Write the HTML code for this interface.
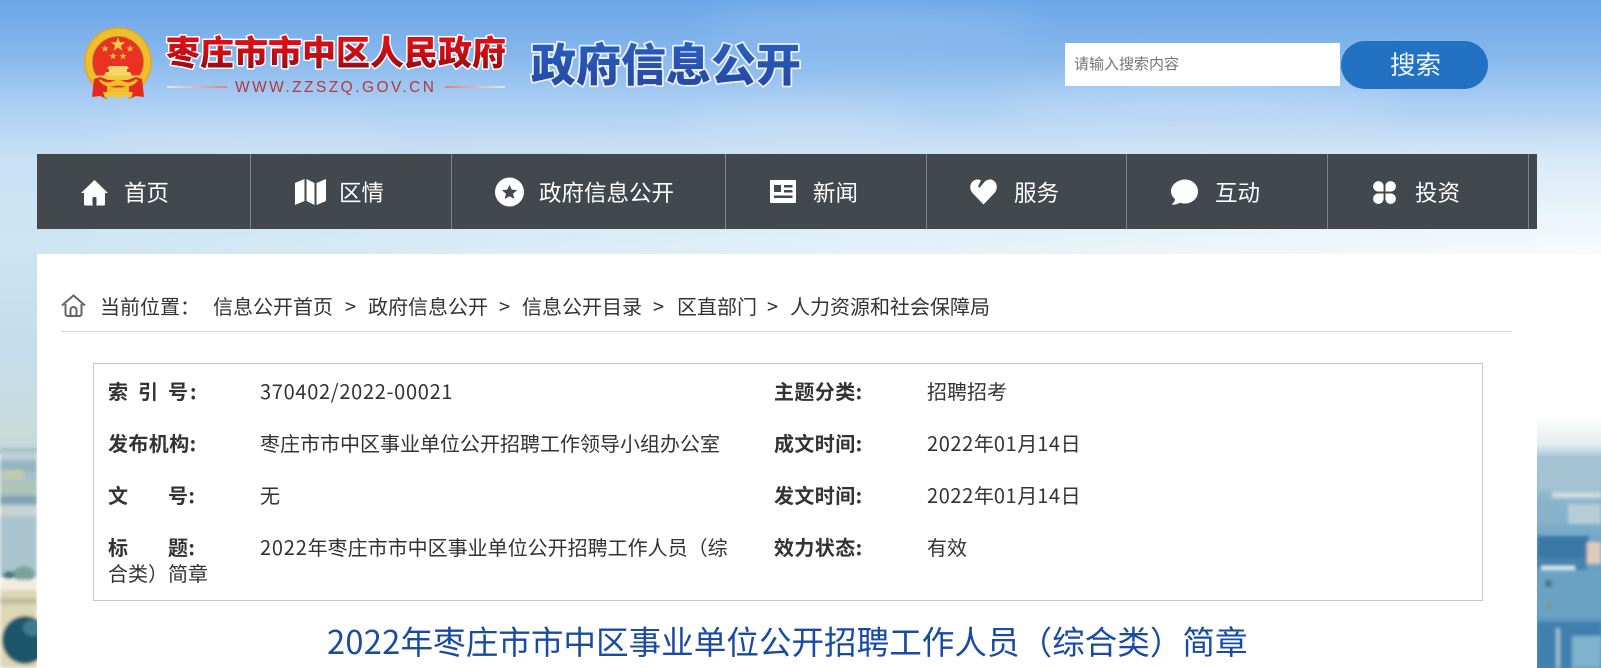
<!DOCTYPE html>
<html lang="zh-CN">
<head>
<meta charset="utf-8">
<title>政府信息公开</title>
<style>
*{margin:0;padding:0;box-sizing:border-box}
html,body{width:1601px;height:668px;overflow:hidden;background:#fff}
body{position:relative;font-family:"Liberation Sans","Noto Sans CJK SC",sans-serif}
.t{position:absolute;white-space:nowrap;font-family:"Noto Sans CJK SC","Liberation Sans",sans-serif;font-size:20px;line-height:24px;color:#333}
.b{font-weight:700;color:#333;letter-spacing:.4px}
.d{letter-spacing:.6px}
.nav{position:absolute;left:37px;top:154px;width:1500px;height:75px;background:#43484c}
.div{position:absolute;top:154px;width:1px;height:75px;background:#7d8286}
.n{position:absolute;top:176px;white-space:nowrap;font-family:"Noto Sans CJK SC",sans-serif;font-size:22.5px;line-height:32px;color:#fff}
svg.abs{position:absolute}
</style>
</head>
<body>
<svg class="abs" style="left:0;top:0" width="1601" height="668" viewBox="0 0 1601 668">
<defs>
<linearGradient id="sky" x1="0" y1="0" x2="0" y2="1">
<stop offset="0" stop-color="#6aa6e8"/>
<stop offset=".2" stop-color="#84b6ec"/>
<stop offset=".42" stop-color="#aed0f3"/>
<stop offset=".62" stop-color="#c9e1f6"/>
<stop offset="1" stop-color="#cfe6f2"/>
</linearGradient>
<linearGradient id="fadeH" x1="0" y1="0" x2="1" y2="0">
<stop offset="0" stop-color="#000"/>
<stop offset=".35" stop-color="#555"/>
<stop offset="1" stop-color="#fff"/>
</linearGradient>
<linearGradient id="fadeV" x1="0" y1="0" x2="0" y2="1">
<stop offset="0" stop-color="#fff" stop-opacity="0"/>
<stop offset="1" stop-color="#fff" stop-opacity=".88"/>
</linearGradient>
<mask id="mH"><rect width="1601" height="668" fill="url(#fadeH)"/></mask>
<linearGradient id="leftS" x1="0" y1="0" x2="0" y2="1">
<stop offset="0" stop-color="#cbe4f1"/>
<stop offset=".5" stop-color="#c4dcec"/>
<stop offset=".9" stop-color="#c8dcdc"/>
<stop offset="1" stop-color="#c4d6d6"/>
</linearGradient>
<linearGradient id="rightC" x1="0" y1="0" x2="0" y2="1">
<stop offset="0" stop-color="#fff"/>
<stop offset=".39" stop-color="#fff"/>
<stop offset=".46" stop-color="#e4edf0"/>
<stop offset=".49" stop-color="#a9c8d8"/>
<stop offset=".7" stop-color="#6fa6c6"/>
<stop offset="1" stop-color="#4f90bb"/>
</linearGradient>
<linearGradient id="redT" x1="0" y1="0" x2="0" y2="1">
<stop offset="0" stop-color="#ee1119"/>
<stop offset=".55" stop-color="#c90d15"/>
<stop offset="1" stop-color="#850a10"/>
</linearGradient>
<linearGradient id="blueT" x1="0" y1="0" x2="0" y2="1">
<stop offset="0" stop-color="#2a66c4"/>
<stop offset="1" stop-color="#27439f"/>
</linearGradient>
<filter id="bl" x="-20%" y="-20%" width="140%" height="140%"><feGaussianBlur stdDeviation="16"/></filter>
<filter id="b1" x="-5%" y="-5%" width="110%" height="110%"><feGaussianBlur stdDeviation="1.6"/></filter>
<filter id="sh" x="-5%" y="-20%" width="110%" height="140%"><feGaussianBlur stdDeviation=".35"/></filter>
</defs>
<rect width="1601" height="260" fill="url(#sky)"/>
<g mask="url(#mH)"><rect x="0" y="110" width="1601" height="150" fill="url(#fadeV)"/></g>
<g filter="url(#bl)" fill="#fff" opacity=".14">
<ellipse cx="870" cy="25" rx="170" ry="16"/>
<ellipse cx="1200" cy="105" rx="200" ry="22"/>
<ellipse cx="800" cy="120" rx="120" ry="16"/>
<ellipse cx="240" cy="135" rx="150" ry="14"/>
</g>
<rect y="254" width="37" height="200" fill="url(#leftS)"/>
<g filter="url(#b1)">
<rect y="448" width="37" height="74" fill="#a3c0cb"/>
<rect y="452" width="37" height="7" fill="#bdd0d4"/>
<rect y="462" width="37" height="10" fill="#93b3c0"/>
<rect x="2" y="470" width="22" height="10" fill="#c0cbb0"/>
<rect y="482" width="37" height="12" fill="#afc3b6"/>
<rect y="496" width="37" height="8" fill="#84a3b4"/>
<rect y="506" width="37" height="10" fill="#c8d3d2"/>
<rect y="516" width="37" height="62" fill="#abc5d0"/>
<ellipse cx="24" cy="574" rx="11" ry="8" fill="#7ba39a"/>
<ellipse cx="9" cy="575" rx="6" ry="4" fill="#3f7a85"/>
<rect y="580" width="37" height="10" fill="#f2ece0"/>
<rect y="590" width="37" height="78" fill="#dcd7b4"/>
<rect y="598" width="37" height="6" fill="#bdbba2"/>
<ellipse cx="25" cy="640" rx="23" ry="24" fill="#1c566b"/>
<ellipse cx="33" cy="628" rx="10" ry="8" fill="#3f7c90"/>
</g>
<rect x="1537" y="254" width="64" height="414" fill="url(#rightC)"/>
<g filter="url(#b1)">
<rect x="1537" y="456" width="64" height="34" fill="#a4c2d3"/>
<rect x="1552" y="492" width="49" height="6" fill="#cfdadd"/>
<rect x="1568" y="504" width="33" height="20" fill="#b7cdd6"/>
<rect x="1537" y="500" width="24" height="25" fill="#87b2c8"/>
<rect x="1537" y="536" width="52" height="22" fill="#3b78a6"/>
<rect x="1587" y="542" width="14" height="22" fill="#dfcbbc"/>
<rect x="1537" y="558" width="50" height="12" fill="#4683b0"/>
<rect x="1541" y="566" width="34" height="4" fill="#dfe9ee"/>
<rect x="1537" y="572" width="64" height="46" fill="#6aa2c4"/>
<rect x="1545" y="580" width="7" height="7" fill="#4f7288"/>
<rect x="1545" y="603" width="7" height="5" fill="#7a959a"/>
<rect x="1537" y="622" width="64" height="46" fill="#3f80ae"/>
<rect x="1572" y="636" width="29" height="32" fill="#7fb2cc"/>
<rect x="1556" y="628" width="4" height="40" fill="#9dbfce"/>
</g>
</svg>

<!-- White panel -->
<div style="position:absolute;left:37px;top:254px;width:1500px;height:414px;background:#fff"></div>

<!-- Emblem + logo -->
<svg class="abs" style="left:0;top:0" width="830" height="110" viewBox="0 0 830 110">
<g filter="url(#sh)">
<ellipse cx="118" cy="62" rx="33" ry="34" fill="#efbd2e"/>
<ellipse cx="118" cy="62" rx="33" ry="34" fill="none" stroke="#e6a81f" stroke-width="1.500"/>
<circle cx="118" cy="62" r="25.500" fill="#ea3022" stroke="#b9891f" stroke-width=".8"/>
<polygon fill="#f4cd4a" points="118,37 119.800,42.200 125.300,42.200 120.900,45.500 122.500,50.800 118,47.600 113.500,50.800 115.100,45.500 110.700,42.200 116.200,42.200"/>
<polygon fill="#eec045" points="105,45 106,47.500 108.600,47.500 106.500,49.200 107.300,51.700 105,50.200 102.700,51.700 103.500,49.200 101.400,47.500 104,47.500"/>
<polygon fill="#eec045" points="130,45 131,47.500 133.600,47.500 131.500,49.200 132.300,51.700 130,50.200 127.700,51.700 128.500,49.200 126.400,47.500 129,47.500"/>
<polygon fill="#eec045" points="113,52.500 114,55 116.600,55 114.500,56.700 115.300,59.200 113,57.700 110.700,59.200 111.500,56.700 109.400,55 112,55"/>
<polygon fill="#eec045" points="123,52.500 124,55 126.600,55 124.500,56.700 125.300,59.200 123,57.700 120.700,59.200 121.500,56.700 119.400,55 122,55"/>
<path fill="#f8d768" d="M109 66h18l2 3h-2v3h3l2 3.500h-28l2-3.500h3v-3h-2z"/>
<path fill="#f3c93f" d="M95 75.500h46l-2.500 4.500h-41z"/>
<path fill="#e42a1c" d="M94 79l-2 18 8-1 7 3V86l7-4-14-5z"/>
<path fill="#e42a1c" d="M142 79l2 18-8-1-7 3V86l-7-4 14-5z"/>
<path fill="#f0bf2c" d="M100 79c5 4 9 4 13 2 3-1.500 7-1.500 10 0 4 2 8 2 13-2l2 1.500c-4 5-9 7-15 5.500-3-.7-6-.7-9 0-6 1.500-11-.5-15-5.500z"/>
<path fill="#f3c536" d="M103 92h30l-2 6-7-2-6 2.500-6-2.500-7 2z"/>
</g>
<text x="166" y="65" font-family="Noto Sans CJK SC" font-size="34" font-weight="900" fill="url(#redT)" stroke="#fff" stroke-width="3" paint-order="stroke fill" stroke-linejoin="round">枣庄市市中区人民政府</text>
<text x="531" y="81" font-family="Noto Sans CJK SC" font-size="45" font-weight="900" fill="url(#blueT)" stroke="#e9f2fc" stroke-width="3.500" paint-order="stroke fill" stroke-linejoin="round">政府信息公开</text>
</svg>
<div style="position:absolute;left:167px;top:86px;width:60px;height:2px;background:linear-gradient(90deg,#dfe7f2,#dc7f7f)"></div>
<div style="position:absolute;left:445px;top:86px;width:60px;height:2px;background:linear-gradient(90deg,#dc7f7f,#dfe7f2)"></div>
<div class="t" style="left:235px;top:77px;font-family:'Liberation Sans',sans-serif;font-size:15.500px;line-height:22px;color:#b3373e;letter-spacing:2.450px">WWW.ZZSZQ.GOV.CN</div>

<!-- Search -->
<div style="position:absolute;left:1065px;top:43px;width:275px;height:43px;background:#fff"></div>
<div class="t" style="left:1074px;top:52px;font-size:15px;color:#757575">请输入搜索内容</div>
<div style="position:absolute;left:1341px;top:41px;width:147px;height:48px;border-radius:24px;background:#2271c2"></div>
<div class="t" style="left:1390px;top:46px;font-size:25.500px;line-height:36px;color:#eef4fb">搜索</div>

<!-- Nav -->
<div class="nav"></div>
<div class="div" style="left:250px"></div>
<div class="div" style="left:451px"></div>
<div class="div" style="left:725px"></div>
<div class="div" style="left:926px"></div>
<div class="div" style="left:1126px"></div>
<div class="div" style="left:1327px"></div>
<div class="div" style="left:1528px"></div>

<svg class="abs" style="left:80px;top:178px" width="29" height="28" viewBox="0 0 29 28"><path fill="#fff" d="M14.500 2 28 15h-3v11a1.500 1.500 0 0 1-1.500 1.500H5.500A1.500 1.500 0 0 1 4 26V15H1z"/><rect x="12.500" y="19" width="4" height="8.500" rx="1" fill="#43484c"/></svg>
<div class="n" style="left:124px">首页</div>

<svg class="abs" style="left:295px;top:178px" width="31" height="28" viewBox="0 0 31 28"><path fill="#fff" d="M0 5 9.500 1v22L0 27zM11.500 1l8 4v22l-8-4zM21.500 5 31 1v22l-9.500 4z"/></svg>
<div class="n" style="left:339px">区情</div>

<svg class="abs" style="left:495px;top:177px" width="29" height="30" viewBox="0 0 30 30"><path fill="#fff" fill-rule="evenodd" d="M15 0a15 15 0 1 0 0 30 15 15 0 0 0 0-30zM15 7.500l2.300 5 5.500.6-4.100 3.700 1.200 5.400L15 19.400l-4.900 2.800 1.200-5.400-4.100-3.700 5.500-.6z"/></svg>
<div class="n" style="left:539px">政府信息公开</div>

<svg class="abs" style="left:770px;top:180px" width="26" height="23" viewBox="0 0 26 23"><path fill="#fff" fill-rule="evenodd" d="M1 0h24a1 1 0 0 1 1 1v21a1 1 0 0 1-1 1H1a1 1 0 0 1-1-1V1a1 1 0 0 1 1-1zM4 5v7h7V5zM14 5v2.500h8.500V5zM14 10v2.500h8.500V10zM4 15.500V18h18.500v-2.500z"/></svg>
<div class="n" style="left:813px">新闻</div>

<svg class="abs" style="left:970px;top:179px" width="27" height="26" viewBox="0 0 27 26"><path fill="#fff" d="M13.500 25.500 2.500 14C-1 10-.5 3.500 4.500 1.200 7 .1 9.500.4 11 1.500L8 7.500l1.500 1.200L14 3.500C16 .8 20-.4 23 1.200c4.500 2.400 5 8.600 1.500 12.800z"/></svg>
<div class="n" style="left:1014px">服务</div>

<svg class="abs" style="left:1171px;top:179px" width="27" height="26" viewBox="0 0 27 26"><path fill="#fff" d="M14 .5C21 .5 27 5.500 27 12.500S21 24.500 14 24.500c-2 0-3.500-.3-5-.8C6.500 25 3.500 26 .5 25.500 2.500 24 4 22 4 20 1.500 18 0 15.500 0 12.500 0 5.500 7 .5 14 .5z"/></svg>
<div class="n" style="left:1215px">互动</div>

<svg class="abs" style="left:1372px;top:180px" width="25" height="25" viewBox="0 0 26 26"><g fill="#fff"><path d="M12 12H5.500A5.500 5.500 0 1 1 12 5.500z"/><path d="M14 12h6.500A5.500 5.500 0 1 0 14 5.500z"/><path d="M12 14H5.500A5.500 5.500 0 1 0 12 20.500z"/><path d="M14 14h6.500A5.500 5.500 0 1 1 14 20.500z"/></g></svg>
<div class="n" style="left:1415px">投资</div>

<!-- Breadcrumb -->
<svg class="abs" style="left:61px;top:294px" width="25" height="23" viewBox="0 0 25 23" fill="none" stroke="#666" stroke-width="2"><path d="M1 11.500 12.500 1.500 24 11.500"/><path d="M4.500 10v10a2 2 0 0 0 2 2h12a2 2 0 0 0 2-2V10"/><path d="M9.500 22v-6a3 3 0 0 1 6 0v6"/></svg>
<div class="t" style="left:100px;top:294px">当前位置：</div>
<div class="t" style="left:213px;top:294px">信息公开首页</div>
<div class="t" style="left:345px;top:294px">&gt;</div>
<div class="t" style="left:368px;top:294px">政府信息公开</div>
<div class="t" style="left:499px;top:294px">&gt;</div>
<div class="t" style="left:522px;top:294px">信息公开目录</div>
<div class="t" style="left:653px;top:294px">&gt;</div>
<div class="t" style="left:677px;top:294px">区直部门</div>
<div class="t" style="left:767px;top:294px">&gt;</div>
<div class="t" style="left:790px;top:294px">人力资源和社会保障局</div>
<div style="position:absolute;left:61px;top:331px;width:1451px;height:1px;background:#d9d9d9"></div>

<!-- Info box -->
<div style="position:absolute;left:93px;top:363px;width:1390px;height:238px;border:1px solid #c9c9c9"></div>

<div class="t b" style="left:108px;top:379px;letter-spacing:10px">索引号</div>
<div class="t b" style="left:190px;top:379px">:</div>
<div class="t" style="left:260px;top:379px"><span class="d" style="letter-spacing:.7px">370402/2022-00021</span></div>
<div class="t b" style="left:774px;top:379px">主题分类:</div>
<div class="t" style="left:927px;top:379px">招聘招考</div>

<div class="t b" style="left:108px;top:431px">发布机构:</div>
<div class="t" style="left:260px;top:431px">枣庄市市中区事业单位公开招聘工作领导小组办公室</div>
<div class="t b" style="left:774px;top:431px">成文时间:</div>
<div class="t" style="left:927px;top:431px"><span class="d">2022</span>年<span class="d">01</span>月<span class="d">14</span>日</div>

<div class="t b" style="left:108px;top:483px">文</div>
<div class="t b" style="left:168px;top:483px">号:</div>
<div class="t" style="left:260px;top:483px">无</div>
<div class="t b" style="left:774px;top:483px">发文时间:</div>
<div class="t" style="left:927px;top:483px"><span class="d">2022</span>年<span class="d">01</span>月<span class="d">14</span>日</div>

<div class="t b" style="left:108px;top:535px">标</div>
<div class="t b" style="left:168px;top:535px">题:</div>
<div class="t" style="left:260px;top:535px"><span style="letter-spacing:.8px">2022</span>年枣庄市市中区事业单位公开招聘工作人员（综</div>
<div class="t" style="left:108px;top:561px">合类）简章</div>
<div class="t b" style="left:774px;top:535px">效力状态:</div>
<div class="t" style="left:927px;top:535px">有效</div>

<div class="t" style="left:327px;top:618px;font-size:32.600px;line-height:46px;color:#1a4ba3"><span style="letter-spacing:.3px">2022</span>年枣庄市市中区事业单位公开招聘工作人员（综合类）简章</div>
</body>
</html>
